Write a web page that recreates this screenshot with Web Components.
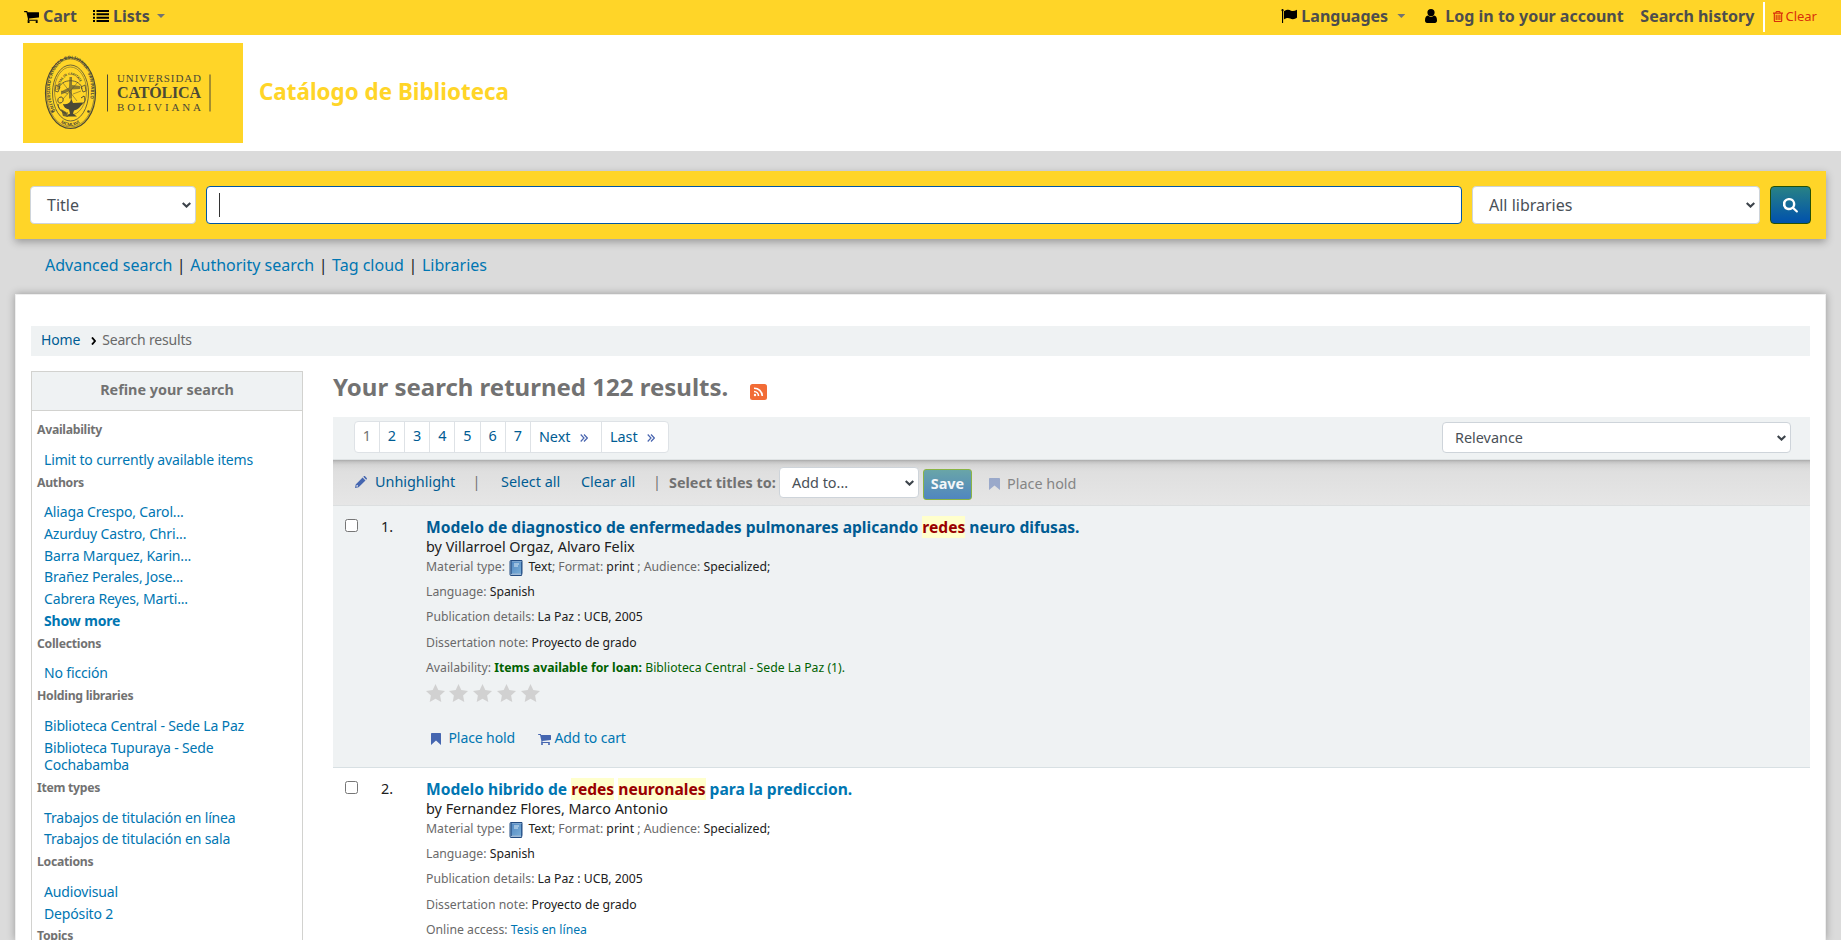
<!DOCTYPE html>
<html lang="en"><head><meta charset="utf-8"><title>Catálogo de Biblioteca</title>
<style>
html,body{margin:0;padding:0}
body{background:#dbdbdb;font-family:"Noto Sans",sans-serif;font-size:16px;height:940px;overflow:hidden;color:#202020}
</style></head><body>
<opac-app></opac-app>
<script>
const base = `*{box-sizing:border-box} a{text-decoration:none;color:#0076b2} span,a,p,h1,h2{white-space:nowrap}`;
function define(name, css, html){
  customElements.define(name, class extends HTMLElement{
    constructor(){super();this.attachShadow({mode:'open'}).innerHTML=`<style>${base}${css}</style>${html}`}
  });
}
const glyphs = {
  cart:['0 0 1664 1536','M640 1408q0 52-38 90t-90 38-90-38-38-90 38-90 90-38 90 38 38 90zm896 0q0 52-38 90t-90 38-90-38-38-90 38-90 90-38 90 38 38 90zm128-1088v512q0 24-16.500 42.500t-40.500 21.500l-1044 122q13 60 13 70 0 16-24 64h920q26 0 45 19t19 45-19 45-45 19h-1024q-26 0-45-19t-19-45q0-11 8-31.500t16-36 21.500-40 15.500-29.500l-177-823h-204q-26 0-45-19t-19-45 19-45 45-19h256q16 0 28.500 6.500t19.500 15.500 13 24.500 8 26 5.500 29.500 4.500 26h1201q26 0 45 19t19 45z'],
  list:['0 0 16 12.500','M0 0h2v2H0zM3.500 0H16v2H3.500zM0 3.500h2v2H0zM3.500 3.500H16v2H3.500zM0 7h2v2H0zM3.500 7H16v2H3.500zM0 10.500h2v2H0zM3.500 10.500H16v2H3.500z'],
  flag:['0 0 16 14','M1.400 0a1.200 1.200 0 0 1 .7 2.200V14H1V2.200A1.200 1.200 0 0 1 1.400 0zM2.900 2.300C6.500.2 8 .7 10 1.700c2 .9 3.800.2 5.600-.8.3-.1.4.1.4.3v7.300c0 .5-2.600 1.700-4.200 1.700C9.700 10.200 8.800 9 6.800 9c-1.500 0-2.500.6-3.900 1.400z'],
  user:['0 0 12 14','M6 0a3.600 3.600 0 1 1 0 7.200A3.600 3.600 0 0 1 6 0zM2.900 6.500a4.600 4.600 0 0 0 6.200 0c2 .2 2.900 2.300 2.900 5C12 13 11.200 14 9.900 14H2.100C.8 14 0 13 0 11.500c0-2.700.9-4.800 2.900-5z'],
  trash:['0 0 12 13','M4.300 0h3.400c.5 0 .8.300 1 .7l.5 1.200H12v1.300h-.9v8.300c0 .9-.6 1.500-1.300 1.500H2.200c-.7 0-1.300-.6-1.300-1.500V3.200H0V1.900h2.800L3.300.7c.2-.4.500-.7 1-.7zM4.100 1.900h3.800L7.500 1.100h-3zM2.300 3.300v8c0 .3.200.4.400.4h6.600c.2 0 .4-.1.400-.4v-8zM3.200 4.500h1.300v6H3.200zM5.400 4.500h1.300v6H5.400zM7.600 4.500h1.300v6H7.600z'],
  search:['0 0 16 16','M6.600 0a6.500 6.500 0 0 1 5.400 10.100l3.600 3.500c.5.500.5 1 0 1.500s-1.200.5-1.600.1l-3.700-3.600A6.500 6.500 0 1 1 6.600 0zm0 2.500a4 4 0 1 0 0 8 4 4 0 0 0 0-8z'],
  pencil:['0 0 12 12','M7.600 1.500 10.500 4.400 3.600 11.300 0 12 .7 8.400zM8.300.8 8.800.3c.5-.4.900-.4 1.300 0l1.600 1.600c.4.400.4.900 0 1.300l-.5.500zM1.600 9 1.300 10.700 3 10.400V9.200z'],
  bookmark:['0 0 10 12','M.7 0h8.600c.4 0 .7.300.7.700V12L5 7.600 0 12V.7C0 .3.300 0 .7 0z'],
  star:['0 0 19 18','M9.500 0l2.800 6.100 6.700.8-4.900 4.600 1.200 6.500-5.800-3.200L3.700 18l1.200-6.500L0 6.900l6.700-.8z'],
  chev:['0 0 9 6','M.7 1 4.500 4.600 8.300 1']
};
customElements.define('fa-icon', class extends HTMLElement{
  constructor(){super();this.attachShadow({mode:'open'})}
  connectedCallback(){
    const [box,d]=glyphs[this.getAttribute('name')];
    const line=this.getAttribute('name')==='chev';
    this.shadowRoot.innerHTML=`<style>:host{display:inline-block;flex:none}svg{display:block;width:100%;height:100%}</style><svg viewBox="${box}" preserveAspectRatio="none"><path d="${d}" ${line?'fill="none" stroke="currentColor" stroke-width="2.100"':'fill="currentColor" fill-rule="evenodd"'}/></svg>`;
  }
});
define('pick-box',`:host{display:flex;box-sizing:border-box;align-items:center;justify-content:space-between;background:#fff;border:1px solid #ced4da;border-radius:4px;color:#495057;padding:0 4px 0 12px}
fa-icon{width:9px;height:6px;color:#3d444b}`,`<span><slot></slot></span><fa-icon name="chev"></fa-icon>`);

define('top-bar',`:host{display:flex;height:35px;background:#ffd528;padding:0 24px;font-weight:700;color:#4d4d4d;line-height:33px;justify-content:space-between}
div{display:flex;align-items:flex-start} fa-icon{color:#000}
i{width:8px;height:4px;margin-top:14px;background:#727272;clip-path:polygon(0 0,100% 0,50% 100%)}
.clear{margin:2px 0 0 9px;height:30px;border-left:2px solid #fff;padding-left:8px;color:#d9300b;font-weight:400;font-size:13px;line-height:29px;gap:2px}
.clear fa-icon{color:#d9300b;width:10px;height:11px;margin-top:9px}`,`
<div><fa-icon name="cart" style="width:15px;height:13px;margin:10px 4px 0 0"></fa-icon><span style="width:51px">Cart</span>
<fa-icon name="list" style="width:16px;height:12px;margin:10px 4px 0 -1px"></fa-icon><span style="width:44px">Lists</span><i></i></div>
<div><fa-icon name="flag" style="width:16px;height:14px;margin:9px 4px 0 0"></fa-icon><span style="width:96px">Languages</span><i></i>
<fa-icon name="user" style="width:12px;height:14px;margin:9px 8px 0 20px"></fa-icon><span style="width:195px">Log in to your account</span><span>Search history</span>
<div class="clear"><fa-icon name="trash"></fa-icon><span>Clear</span></div></div>`);

define('ucb-logo',`:host{display:block;width:220px;height:100px;background:#ffd528}svg{display:block}text{font-family:"Noto Sans",sans-serif}.s{font-family:"Liberation Serif",serif}`,`
<svg width="220" height="100" viewBox="0 0 220 100"><defs><path id="arc" d="M32.500 68A20.500 31 0 1 1 62.500 68"/><path id="arc2" d="M35.500 47A12.500 21 0 0 1 59.500 47"/><path id="bot" d="M37 79Q47.500 87 58 79"/></defs>
<g fill="none" stroke="#4b4936">
<ellipse cx="47.500" cy="50" rx="25" ry="35.500" stroke-width="1.200"/><ellipse cx="47.500" cy="50" rx="23.800" ry="34" stroke-width=".5"/><ellipse cx="47.500" cy="50" rx="18" ry="28" stroke-width=".8"/><ellipse cx="47.500" cy="48" rx="16" ry="24" stroke-width=".5"/>
<path d="M36 46c1-11 22-11 23 0M33 42l4 2-2 5-3-1zM62 42l-4 2 2 5 3-1z" stroke-width=".8"/>
<path d="M38 54c-4 0-4 6-1 6 4 0 4-6 1-6M35 61c0 6 6 10 10 9M56 62c6-1 7-5 5-9l-3 2" stroke-width="1"/>
<path d="M40 40l14 18M55 39L40 56M38 48l7 3M50 51l8-3" stroke-width=".5"/>
</g>
<g fill="#4b4936"><path d="M46.500 34h2.500v8l8 1v3l-8 .5v9h-3v-7l-8 3v-3l8-4z" opacity=".65"/><path d="M40 61q8 1 8-6l2 5 10-.5q-3 6.500-9 8l-1 3 4 3H43l4-3-1-4q-5-1-6-5.500z"/><path d="M38 66l5 3 2 5-5-1z" opacity=".8"/><circle cx="29.500" cy="68.500" r="1.300"/><circle cx="65.500" cy="68.500" r="1.300"/></g>
<g fill="#4b4936" font-weight="700"><text font-size="4.300"><textPath href="#arc" textLength="112">UNIVERSIDAD CATÓLICA BOLIVIANA · SAN PABLO</textPath></text><text font-size="3.200"><textPath href="#arc2">VERITAS IN CARITATE</textPath></text><text font-size="4.300"><textPath href="#bot" startOffset="1">MCMLXVI</textPath></text></g>
<path d="M84.500 31.500v37M187 31.500v37" stroke="#4b4936" stroke-width="1"/>
<g fill="#4b4936"><text class="s" x="94" y="38.700" font-size="11" textLength="84">UNIVERSIDAD</text><text class="s" x="94" y="55.300" font-size="16" font-weight="700" textLength="84">CATÓLICA</text><text class="s" x="94" y="68" font-size="11" textLength="84">BOLIVIANA</text></g></svg>`);

define('site-header',`:host{display:flex;align-items:center;height:116px;background:#fff;padding:0 23px 0;gap:16px}
span{font-size:22.400px;font-weight:700;color:#ffd528;padding-bottom:4px}`,`<ucb-logo></ucb-logo><span>Catálogo de Biblioteca</span>`);

define('search-bar',`:host{display:flex;height:68px;margin:20px 15px 0;padding:15px 15px;background:#ffd528;box-shadow:0 3px 8px rgba(0,0,0,.3);gap:10px}
.q{flex:1;border:1px solid #0055a5;border-radius:4px;background:#fff;padding:6px 12px}.q i{display:block;width:1px;height:24px;background:#333}
.b{display:flex;width:41px;height:38px;align-items:center;justify-content:center;border:1px solid #255005;border-radius:4px;background:linear-gradient(#288285,#0051ad);color:#fff}
.b fa-icon{width:15px;height:15px}`,`<pick-box style="width:166px;padding-left:16px">Title</pick-box><div class="q"><i></i></div><pick-box style="width:288px;padding-left:16px">All libraries</pick-box><div class="b"><fa-icon name="search"></fa-icon></div>`);

define('more-searches',`:host{display:flex;height:55px;padding:14px 0 0 45px;line-height:24px}span{width:18px;text-align:center;color:#202020}`,
`<a>Advanced search</a><span>|</span><a>Authority search</a><span>|</span><a>Tag cloud</a><span>|</span><a>Libraries</a>`);

define('bread-crumbs',`:host{display:flex;height:30px;background:#eff2f3;align-items:center;padding:0 10px 3px;font-size:14px;letter-spacing:-.17px;color:#696969}a{color:#005c93}
svg{margin:3px 6px 0 11px}`,
`<a>Home</a><svg width="5" height="8" viewBox="0 0 5 8"><path d="M1 .5 4 4 1 7.500" fill="none" stroke="#000" stroke-width="1.900"/></svg><span>Search results</span>`);

customElements.define('facet-group', class extends HTMLElement{
  constructor(){super();this.attachShadow({mode:'open'})}
  connectedCallback(){
    this.shadowRoot.innerHTML=`<style>${base}:host{display:block}h2{margin:0;font-size:12.240px;letter-spacing:-.28px;line-height:18px;color:#727272;font-weight:700;padding-left:5px}
    div{padding:9.500px 0 3.250px}a{display:block;font-size:14px;letter-spacing:-.15px;line-height:17.280px;white-space:normal;margin:0 60px 0 12px;padding:2.235px 0}a.more{font-weight:700}</style>
    <h2>${this.getAttribute('label')}</h2><div>${this.getAttribute('items').split('|').map(t=>`<a class="${t==='Show more'?'more':''}" style="${/Limit|La Paz/.test(t)?'margin-right:30px':''}">${t}</a>`).join('')}</div>`;
  }
});
define('refine-panel',`:host{display:block;width:272px;height:700px;border:1px solid #d2d2cf;flex:none}
h1{margin:0 0 10px;height:39px;background:#eff2f3;border-bottom:1px solid #d2d2cf;font-size:14.400px;line-height:36px;text-align:center;color:#727272}`,
`<h1>Refine your search</h1>
<facet-group label="Availability" items="Limit to currently available items"></facet-group>
<facet-group label="Authors" items="Aliaga Crespo, Carol...|Azurduy Castro, Chri...|Barra Marquez, Karin...|Brañez Perales, Jose...|Cabrera Reyes, Marti...|Show more"></facet-group>
<facet-group label="Collections" items="No ficción"></facet-group>
<facet-group label="Holding libraries" items="Biblioteca Central - Sede La Paz|Biblioteca Tupuraya - Sede Cochabamba"></facet-group>
<facet-group label="Item types" items="Trabajos de titulación en línea|Trabajos de titulación en sala"></facet-group>
<facet-group label="Locations" items="Audiovisual|Depósito 2"></facet-group>
<facet-group label="Topics" items=""></facet-group>`);

define('results-heading',`:host{display:flex;height:46px;align-items:flex-start}h1{margin:0;font-size:24px;line-height:31px;color:#727272;font-weight:700}svg{margin:13px 0 0 22px}`,
`<h1>Your search returned 122 results.</h1><svg width="17" height="16" viewBox="0 0 17 16"><rect width="17" height="16" rx="2.500" fill="#f26c36"/><g fill="none" stroke="#fff" stroke-width="1.600"><path d="M4 7.500a4.500 4.500 0 0 1 4.500 4.500M4 4.200A8 8 0 0 1 12.300 12"/></g><circle cx="5" cy="11" r="1.200" fill="#fff"/></svg>`);

const raquo = `<svg width="8" height="8" viewBox="0 0 8 8"><path d="M.7.500 4 4 .7 7.500M4 .5 7.300 4 4 7.500" fill="none" stroke="#4a66b0" stroke-width="1.200"/></svg>`;
define('pager-bar',`:host{display:flex;height:42px;background:#eff2f3;padding:4px 19px 0 21px;justify-content:space-between;font-size:14.400px}
.p{display:flex;height:32px;border:1px solid #dee2e6;border-radius:4px;background:#fff;line-height:28px}
.p a{width:25.200px;text-align:center;border-left:1px solid #dee2e6;color:#005c93}.p a:first-child{border:0;color:#727272;width:23.800px}
.p .w{width:71px;text-align:left;padding-left:8px;display:flex;align-items:center;gap:9px;height:30px;line-height:27px}.p .w svg{margin-top:1px}.p .w span{padding-bottom:2px}.p .w:last-child{width:67px}
pick-box{width:349px;height:31px;margin-top:1px}`,
`<div class="p"><a>1</a><a>2</a><a>3</a><a>4</a><a>5</a><a>6</a><a>7</a><a class="w"><span>Next</span>${raquo}</a><a class="w"><span>Last</span>${raquo}</a></div><pick-box>Relevance</pick-box>`);

define('select-bar',`:host{display:flex;height:47px;border-bottom:1px solid #dcdfe0;background:linear-gradient(#aaa,#c4c4c4 2px,#d5d5d5 5px,#dcdcdc 9px,#dfdfdf 12px,#e6e6e6);padding-left:22px;font-size:14.400px;line-height:44px;color:#727272;border-top:1px solid #dfe3e4}
fa-icon{color:#4566b0}a{color:#005c93}
.save{width:49px;height:31px;margin:9px 17px 0 4px;border:1px solid #8ab445;border-radius:3px;background:linear-gradient(#69a5a8,#5086c0);color:#f3f6f8;font-weight:700;text-align:center;line-height:28px}
pick-box{width:140px;height:31px;margin-top:7px;line-height:20px}`,
`<fa-icon name="pencil" style="width:12px;height:12px;margin:16px 8px 0 0"></fa-icon><a style="width:97.500px">Unhighlight</a><span style="width:28.500px">|</span><a style="width:80px">Select all</a><a style="width:72px">Clear all</a><span style="width:16px">|</span><b style="width:110px;line-height:45px;white-space:nowrap">Select titles to:</b><pick-box>Add to...</pick-box><div class="save">Save</div>
<fa-icon name="bookmark" style="width:11px;height:12px;margin:18px 7px 0 0;opacity:.45"></fa-icon><span style="line-height:47px;color:#858585">Place hold</span>`);

define('book-icon',`:host{display:inline-block;width:14px;height:16px;vertical-align:-5px;margin:0 2px 0 1px;line-height:0}`,
`<svg width="14" height="16" viewBox="0 0 14 16"><defs><linearGradient id="g" x2="1" y2="1"><stop stop-color="#548ac3"/><stop offset="1" stop-color="#78acd6"/></linearGradient></defs><path d="M1 1.500Q1 .5 2 .5h11v12.500l-.5 2.500H2q-1 0-1-1z" fill="#9db8d5" stroke="#234c82"/><path d="M2.500 1.500h9.500v12H2.500z" fill="url(#g)"/><path d="M2.300 1v13M12.500 2v12" stroke="#2d5a91" fill="none"/><path d="M5 4h5M5 6h4" stroke="#d9e9f5"/></svg>`);

define('result-row',`:host{display:grid;grid-template-columns:37px 44px 1fr;height:262px;border-bottom:1px solid #d8e0e3;padding:0 0 0 12px}
.c{width:13px;height:13px;border:1px solid #767676;border-radius:2.500px;background:#fff;margin-top:13px;align-self:start}
.n{font-size:14.400px;line-height:20px;padding-top:11px;margin-left:-1px}
.t{font-size:15.600px;line-height:22px;font-weight:700;margin-top:10px;color:var(--tc,#0076b2)}
.by{font-size:14.400px;line-height:18px;height:19.500px;margin-top:0}`,
`<span class="c"></span><span class="n"><slot name="n"></slot></span><div><div class="t"><slot name="title"></slot></div><div class="by"><slot name="by"></slot></div><slot></slot></div>`);
define('hit-mark',`:host{background:#ffffcc;color:#990000}`,`<slot></slot>`);
define('meta-line',`:host{display:block;font-size:12.240px;line-height:18px;height:25.400px;color:#202020;white-space:nowrap}b{font-weight:400;color:#696969}`,`<b><slot name="l"></slot></b> <slot></slot>`);
define('star-row',`:host{display:flex;gap:4.900px;height:18px;margin:0 0 0 -.5px}fa-icon{width:19px;height:18px;color:#d1d1d1}`,`<fa-icon name="star"></fa-icon>`.repeat(5));
define('row-actions',`:host{display:flex;font-size:14px;letter-spacing:-.1px;line-height:20px;margin:26px 0 0 4.500px;height:22px}fa-icon{color:#4566b0}`,
`<fa-icon name="bookmark" style="width:10px;height:12px;margin:5px 8px 0 0"></fa-icon><a style="width:89px">Place hold</a><fa-icon name="cart" style="width:13px;height:12px;margin:5px 4px 0 0"></fa-icon><a>Add to cart</a>`);

define('result-list',`:host{display:block}.m{color:#696969}`,`
<result-row style="background:#eff2f3;--tc:#005c93"><span slot="n">1.</span><span slot="title">Modelo de diagnostico de enfermedades pulmonares aplicando <hit-mark>redes</hit-mark> neuro difusas.</span><span slot="by">by Villarroel Orgaz, Alvaro Felix</span>
<meta-line><span slot="l">Material type:</span><book-icon></book-icon> Text<span class="m">; Format:</span> print <span class="m">; Audience:</span> Specialized;</meta-line>
<meta-line><span slot="l">Language:</span>Spanish</meta-line><meta-line><span slot="l">Publication details:</span>La Paz : UCB, 2005</meta-line><meta-line><span slot="l">Dissertation note:</span>Proyecto de grado</meta-line>
<meta-line><span slot="l">Availability:</span><span style="color:#006100"><b>Items available for loan:</b> Biblioteca Central - Sede La Paz (1).</span></meta-line><star-row></star-row><row-actions></row-actions></result-row>
<result-row><span slot="n">2.</span><span slot="title">Modelo hibrido de <hit-mark>redes</hit-mark> <hit-mark>neuronales</hit-mark> para la prediccion.</span><span slot="by">by Fernandez Flores, Marco Antonio</span>
<meta-line><span slot="l">Material type:</span><book-icon></book-icon> Text<span class="m">; Format:</span> print <span class="m">; Audience:</span> Specialized;</meta-line>
<meta-line><span slot="l">Language:</span>Spanish</meta-line><meta-line><span slot="l">Publication details:</span>La Paz : UCB, 2005</meta-line><meta-line><span slot="l">Dissertation note:</span>Proyecto de grado</meta-line>
<meta-line><span slot="l">Online access:</span><a>Tesis en línea</a></meta-line></result-row>`);

define('results-page',`:host{display:block;height:646px;margin:0 15px;padding:31px 15px 0;background:#fff;border:1px solid #eee;border-bottom:0;box-shadow:0 0 8px rgba(0,0,0,.3)}
.cols{display:grid;grid-template-columns:272px 1fr;gap:30px;margin-top:15px}`,
`<bread-crumbs></bread-crumbs><div class="cols"><refine-panel></refine-panel><div class="main"><results-heading></results-heading><pager-bar></pager-bar><select-bar></select-bar><result-list></result-list></div></div>`);
define('opac-app',`:host{display:block;height:940px;overflow:hidden}`,`<top-bar></top-bar><site-header></site-header><search-bar></search-bar><more-searches></more-searches><results-page></results-page>`);
</script></body></html>
